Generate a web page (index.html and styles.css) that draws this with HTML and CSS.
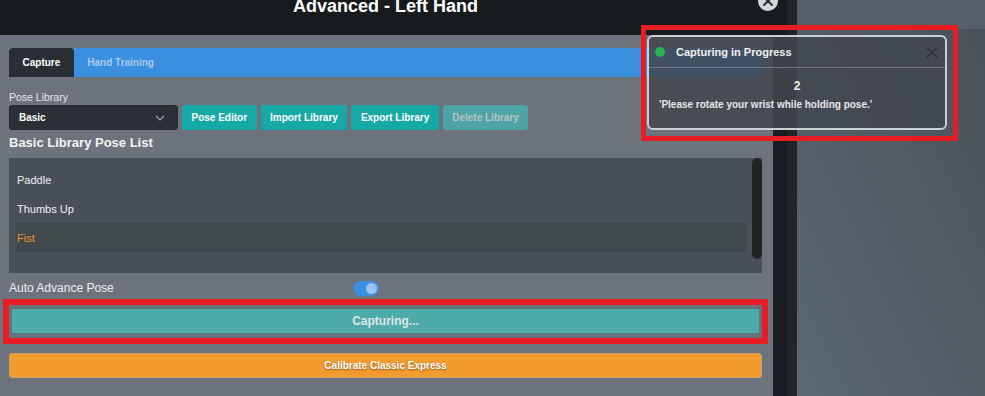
FILE: index.html
```html
<!DOCTYPE html>
<html lang="en">
<head>
    <meta charset="UTF-8">
    <meta name="viewport" content="width=device-width, initial-scale=1.0">
    <title>Advanced - Left Hand</title>
    <link rel="stylesheet" href="styles.css">
</head>
<body>
    <div class="screen">
        <section class="dialog">
            <header class="dialog-head">
                <h1 class="dialog-title">Advanced - Left Hand</h1>
                <button class="dialog-close" type="button">
                    <svg width="20" height="20" viewBox="0 0 20 20">
                        <path d="M6 6 L14 14 M14 6 L6 14" stroke="#2a2c2f" stroke-width="2" stroke-linecap="round"/>
                    </svg>
                </button>
            </header>
            <div class="dialog-body">
                <div class="content">
                    <nav class="tabs">
                        <span class="tab active">Capture</span>
                        <span class="tab">Hand Training</span>
                    </nav>

                    <div class="field-label">Pose Library</div>
                    <div class="library-row">
                        <div class="select">
                            <span>Basic</span>
                            <svg width="10" height="6" viewBox="0 0 10 6">
                                <path d="M1 1 L5 5 L9 1" fill="none" stroke="#9ba1a8" stroke-width="1.2"/>
                            </svg>
                        </div>
                        <button class="btn" type="button">Pose Editor</button>
                        <button class="btn" type="button">Import Library</button>
                        <button class="btn" type="button">Export Library</button>
                        <button class="btn disabled" type="button">Delete Library</button>
                    </div>

                    <h2 class="list-title">Basic Library Pose List</h2>
                    <div class="pose-list">
                        <ul class="pose-items">
                            <li class="pose-item">Paddle</li>
                            <li class="pose-item">Thumbs Up</li>
                            <li class="pose-item selected">Fist</li>
                        </ul>
                        <div class="list-thumb"></div>
                    </div>

                    <div class="option-row">
                        <span class="option-label">Auto Advance Pose</span>
                        <span class="toggle"><span class="toggle-knob"></span></span>
                    </div>

                    <div class="focus-ring capture-ring">
                        <button class="capture-btn" type="button">Capturing...</button>
                    </div>

                    <button class="calibrate-btn" type="button">Calibrate Classic Express</button>
                </div>
                <div class="track"></div>
            </div>
        </section>
        <div class="edge"></div>
        <div class="backdrop">
            <div class="backdrop-bar"></div>
        </div>
    </div>

    <div class="focus-ring toast-ring">
        <div class="toast">
            <div class="toast-head">
                <span class="toast-dot"></span>
                <span class="toast-title">Capturing in Progress</span>
                <svg width="12" height="11" viewBox="0 0 12 11">
                    <path d="M0.5 0.5 L11.5 10.5 M11.5 0.5 L0.5 10.5" stroke="#2b2e31" stroke-width="1.4"/>
                </svg>
            </div>
            <div class="toast-body">
                <div class="toast-count">2</div>
                <div class="toast-msg">'Please rotate your wrist while holding pose.'</div>
            </div>
        </div>
    </div>
</body>
</html>
```

FILE: styles.css
```css
* {
    margin: 0;
    padding: 0;
    box-sizing: border-box;
    font-family: "Liberation Sans", Arial, sans-serif;
}
body {
    width: 985px;
    height: 396px;
    overflow: hidden;
    background-color: #4b555f;
}
.screen {
    display: flex;
    height: 396px;
}

/* dialog */
.dialog {
    width: 787px;
    display: flex;
    flex-direction: column;
}
.dialog-head {
    position: relative;
    height: 35px;
    display: flex;
    justify-content: center;
    padding-right: 16px;
    background-color: #181b1e;
}
.dialog-title {
    margin-top: -3px;
    font-size: 18px;
    line-height: 18px;
    font-weight: bold;
    color: #fff;
}
.dialog-close {
    position: absolute;
    left: 758px;
    top: -9px;
    width: 20px;
    height: 20px;
    border: none;
    border-radius: 50%;
    background-color: #d5d6d7;
}
.dialog-close svg {
    display: block;
}
.dialog-body {
    flex: 1;
    display: flex;
    min-height: 0;
}
.content {
    width: 773px;
    padding: 13px 11px 0 9px;
    background-color: #6c737c;
}
.track {
    flex: 1;
    background-color: #1b1e21;
}
.edge {
    width: 10px;
    background-color: #222528;
}
.backdrop {
    flex: 1;
    background: linear-gradient(to bottom left, #47515a, #5c6872);
}
.backdrop-bar {
    height: 29px;
    background-color: #57606a;
}

/* tabs */
.tabs {
    display: flex;
    height: 29px;
    background-color: #3a8fdf;
}
.tab {
    display: flex;
    align-items: center;
    padding: 0 13.5px;
    font-size: 10px;
    font-weight: bold;
    color: #a9c9ef;
}
.tab.active {
    background-color: #292d34;
    color: #fff;
    border-radius: 4px 4px 0 0;
}

/* library */
.field-label {
    margin-top: 14px;
    font-size: 10.5px;
    line-height: 12px;
    color: #e4e6e8;
}
.library-row {
    display: flex;
    gap: 4px;
    height: 25px;
    margin-top: 2px;
}
.select {
    width: 169px;
    display: flex;
    align-items: center;
    justify-content: space-between;
    padding: 0 12px 0 9px;
    border: 1px solid #23262b;
    border-radius: 3px;
    background-color: #2b2f36;
    font-size: 10px;
    font-weight: bold;
    color: #fff;
}
.btn {
    padding: 0 9.5px;
    border: none;
    border-radius: 3px;
    background-color: #17a9a6;
    color: #fff;
    font-size: 10px;
    font-weight: bold;
}
.btn.disabled {
    background-color: #4ea3a4;
    color: #b7c3c4;
}
.list-title {
    margin-top: 5px;
    font-size: 13px;
    line-height: 15px;
    font-weight: bold;
    color: #f2f3f4;
}
.pose-list {
    display: flex;
    height: 115px;
    margin-top: 8px;
    background-color: #4a5058;
}
.pose-items {
    flex: 1;
    padding: 7px 6px 0 7px;
    list-style: none;
}
.pose-item {
    height: 29px;
    display: flex;
    align-items: center;
    padding-left: 1px;
    font-size: 11px;
    color: #eef0f2;
}
.pose-item.selected {
    background-color: #42494c;
    color: #f0922b;
}
.list-thumb {
    width: 10px;
    height: 101px;
    border-radius: 5px;
    background-color: #212427;
}

/* options */
.option-row {
    display: flex;
    align-items: center;
    height: 26px;
    padding-top: 4px;
    font-size: 12px;
    color: #eceef0;
}
.option-label {
    width: 344px;
}
.toggle {
    width: 26px;
    height: 15px;
    display: flex;
    align-items: center;
    justify-content: flex-end;
    padding-right: 2px;
    border-radius: 8px;
    background-color: #3b8ee0;
}
.toggle-knob {
    width: 11px;
    height: 11px;
    border-radius: 50%;
    background-color: #9dc1ef;
}

/* red highlight frames */
.focus-ring {
    border: 6px solid #e81c25;
}
.capture-ring {
    margin: 0 -6px;
    padding: 2px 1px 3px;
}
.capture-btn {
    display: block;
    width: 100%;
    height: 28px;
    border: 2px solid #5e7579;
    border-radius: 3px;
    background-color: #4eabab;
    color: #dfe5e5;
    font-size: 12px;
    font-weight: bold;
}
.calibrate-btn {
    display: block;
    width: 100%;
    height: 25px;
    margin-top: 9px;
    border: 1px solid #c9a36d;
    border-radius: 3px;
    background-color: #f29b2f;
    color: #fff;
    font-size: 10px;
    font-weight: bold;
    text-shadow: 0 1px 2px rgba(0, 0, 0, 0.45);
}

/* toast */
.toast-ring {
    position: absolute;
    left: 641px;
    top: 25px;
    width: 317px;
    height: 116px;
    border-width: 5px;
    padding: 5px 6px 6px 1px;
}
.toast {
    height: 100%;
    border: 2px solid #cdd0d3;
    border-radius: 6px;
    background-color: rgba(66, 71, 78, 0.85);
}
.toast-head {
    height: 31px;
    display: flex;
    align-items: center;
    gap: 11px;
    padding: 0 7px 0 6px;
    border-bottom: 1px solid #6f757b;
    font-size: 11px;
    font-weight: bold;
    color: #f0f0f0;
}
.toast-dot {
    width: 10px;
    height: 10px;
    border-radius: 50%;
    background-color: #2bb24c;
}
.toast-title {
    flex: 1;
}
.toast-body {
    padding: 11px 10px 0;
}
.toast-count {
    text-align: center;
    font-size: 12px;
    line-height: 14px;
    font-weight: bold;
    color: #f0f0f0;
}
.toast-msg {
    margin-top: 6px;
    font-size: 10px;
    line-height: 12px;
    font-weight: bold;
    color: #e6e8ea;
}
```
